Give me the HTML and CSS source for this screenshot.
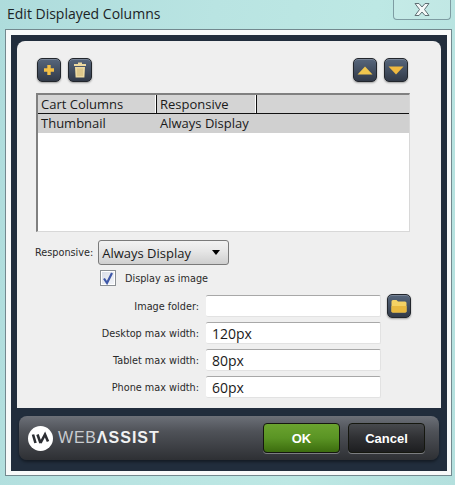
FILE: index.html
```html
<!DOCTYPE html>
<html lang="en">
<head>
  <meta charset="UTF-8" />
  <title>Edit Displayed Columns</title>
  <link rel="stylesheet" href="styles.css">
</head>
<body>
  <div class="titlebar">
    <span class="title">Edit Displayed Columns</span>
    <div class="close">
      <svg width="16" height="15" viewBox="0 0 16 15"><path d="M1 1.500H5L8 5 11 1.500H15L10.500 7.500 15 13.500H11L8 10 5 13.500H1L5.500 7.500Z" fill="#f4f8f8" stroke="#5f6f74" stroke-width="1"/></svg>
    </div>
  </div>

  <div class="frame">
    <div class="panel">
      <div class="toolbar">
        <div class="tool-group">
          <button class="icon-btn" type="button">
            <svg width="12" height="12" viewBox="0 0 12 12"><path d="M4.300 1h3.400v3.300H11v3.400H7.700V11H4.300V7.700H1V4.300h3.300Z" fill="#f3bf45"/></svg>
          </button>
          <button class="icon-btn" type="button">
            <svg width="14" height="16" viewBox="0 0 14 16"><path d="M5 .5h4v1.500h4v2H1v-2h4ZM2 5h10l-.6 10.500H2.600Z" fill="#ecd9a0"/><path d="M5 6.500v7.500M7 6.500v7.500M9 6.500v7.500" stroke="#c9ae6c" stroke-width=".8"/></svg>
          </button>
        </div>
        <div class="tool-group">
          <button class="icon-btn" type="button">
            <svg width="16" height="9" viewBox="0 0 16 9"><path d="M8 .5L15.500 8.500H.5Z" fill="#f0c64e"/></svg>
          </button>
          <button class="icon-btn" type="button">
            <svg width="16" height="9" viewBox="0 0 16 9"><path d="M.5 .5h15L8 8.500Z" fill="#f0b93f"/></svg>
          </button>
        </div>
      </div>

      <div class="grid">
        <div class="grid-head">
          <div class="head-cell col-name">Cart Columns</div>
          <div class="head-cell col-resp">Responsive</div>
          <div class="head-rest"></div>
        </div>
        <div class="grid-row">
          <div class="col-name">Thumbnail</div>
          <div class="col-resp">Always Display</div>
        </div>
      </div>

      <div class="select-row">
        <label class="small-label">Responsive:</label>
        <div class="select">
          <span>Always Display</span>
          <span class="caret"></span>
        </div>
      </div>

      <div class="check-row">
        <span class="checkbox">
          <svg width="12" height="13" viewBox="0 0 12 13"><path d="M2 6.500L5 11 10 1" fill="none" stroke="#3f58a8" stroke-width="2.200"/></svg>
        </span>
        <span class="small-label">Display as image</span>
      </div>

      <div class="field first">
        <label class="small-label field-label">Image folder:</label>
        <div class="input"></div>
        <button class="icon-btn" type="button">
          <svg width="16" height="14" viewBox="0 0 16 14"><path d="M.5 2.500Q.5 1 2 1h3.500L7 2.500h7q1.500 0 1.500 1.500v8.500q0 1-1.500 1H2q-1.500 0-1.500-1Z" fill="#f5d264"/><path d="M.5 7h15v5.500q0 1-1.500 1H2q-1.500 0-1.500-1Z" fill="#e9b93f"/></svg>
        </button>
      </div>
      <div class="field">
        <label class="small-label field-label">Desktop max width:</label>
        <div class="input">120px</div>
      </div>
      <div class="field">
        <label class="small-label field-label">Tablet max width:</label>
        <div class="input">80px</div>
      </div>
      <div class="field">
        <label class="small-label field-label">Phone max width:</label>
        <div class="input">60px</div>
      </div>
    </div>

    <div class="footer">
      <div class="logo">
        <span class="logo-mark">
          <svg width="25" height="25" viewBox="0 0 25 25"><circle cx="12.500" cy="12.500" r="12.500" fill="#fff"/><path d="M5 8.500L7.500 17M9.500 8.500L12.500 17M12.500 17L17 8.500 20 15.500" fill="none" stroke="#2c2e33" stroke-width="2.600"/></svg>
        </span>
        <span class="logo-text">WEB<b>ΛSSIST</b></span>
      </div>
      <div class="actions">
        <button class="btn btn-ok" type="button">OK</button>
        <button class="btn btn-cancel" type="button">Cancel</button>
      </div>
    </div>
  </div>
</body>
</html>
```

FILE: styles.css
```css
* {
  margin: 0;
  padding: 0;
  box-sizing: border-box;
}

html, body {
  height: 485px;
  overflow: hidden;
}

body {
  background: linear-gradient(100deg, #aedcdc 0%, #b9e4e2 40%, #bde8e4 70%, #b4e0de 100%);
  font-family: "Open Sans", "DejaVu Sans", sans-serif;
  padding: 0 4px 0 6px;
}

.titlebar {
  height: 30px;
  display: flex;
  justify-content: space-between;
  align-items: flex-start;
  margin-left: -6px;
}

.title {
  font-size: 14px;
  color: #1c2426;
  padding: 4px 0 0 7px;
}

.close {
  width: 58px;
  height: 20px;
  border: 1px solid #7e9ca2;
  border-top: none;
  border-radius: 0 0 4px 4px;
  display: flex;
  justify-content: center;
  align-items: center;
  background: rgba(255, 255, 255, 0.12);
}

.frame {
  height: 445px;
  background: #212d3c;
  border: solid #f7f9f9;
  border-width: 5px 4px 4px 5px;
  box-shadow: 0 0 0 1px #73898f;
  padding: 6px 6px 0 6px;
}

.panel {
  height: 367px;
  background: #efefef;
  border-radius: 8px 8px 0 0;
  padding: 17px 30px 0 20px;
}

.toolbar {
  display: flex;
  justify-content: space-between;
  height: 35px;
  margin-right: 3px;
}

.tool-group {
  display: flex;
  gap: 7px;
}

.icon-btn {
  width: 24px;
  height: 24px;
  border: 1px solid #22262c;
  border-radius: 5px;
  background: linear-gradient(#56667c, #323a48);
  box-shadow: 0 1px 2px rgba(0, 0, 0, 0.35), inset 0 1px 0 rgba(255, 255, 255, 0.2);
  display: flex;
  justify-content: center;
  align-items: center;
  flex: none;
}

.grid {
  height: 139px;
  width: 374px;
  margin-left: -1px;
  background: #fff;
  border: solid #808080;
  border-width: 2px 1px 1px 2px;
  border-bottom-color: #d8d8d8;
  border-right-color: #d8d8d8;
  font-size: 13px;
  color: #1a1a1a;
}

.grid-head {
  display: flex;
  height: 19px;
  background: #d4d4d4;
  border-bottom: 1px solid #111;
}

.head-cell {
  border-right: 1px solid #111;
  box-shadow: inset -1px 0 0 #fff;
}

.head-rest {
  flex: 1;
}

.col-name {
  width: 119px;
  padding-left: 3px;
  flex: none;
  line-height: 18px;
}

.col-resp {
  width: 100px;
  padding-left: 3px;
  flex: none;
  line-height: 18px;
  white-space: nowrap;
}

.grid-row {
  display: flex;
  height: 19px;
  background: #d0d0d0;
}

.small-label {
  font-family: "DejaVu Sans", sans-serif;
  font-size: 9.700px;
  color: #2a2a2a;
  white-space: nowrap;
}

.select-row {
  display: flex;
  align-items: center;
  gap: 5px;
  margin-top: 8px;
  height: 25px;
  margin-left: -2px;
}

.select {
  width: 131px;
  height: 25px;
  border: 1px solid #7a7a7a;
  border-radius: 3px;
  background: linear-gradient(#f2f2f2, #e6e6e6 45%, #cfcfcf);
  font-size: 13px;
  color: #1a1a1a;
  padding: 0 8px 0 3px;
  display: flex;
  align-items: center;
  justify-content: space-between;
}

.caret {
  width: 0;
  height: 0;
  border: 4.500px solid transparent;
  border-top: 5px solid #000;
  border-bottom: none;
}

.check-row {
  display: flex;
  align-items: center;
  gap: 9px;
  margin: 5px 0 0 63px;
  height: 16px;
}

.checkbox {
  width: 16px;
  height: 16px;
  border: 1px solid #8a8f94;
  background: linear-gradient(135deg, #d8dde8, #f4f6fa);
  box-shadow: inset 0 0 0 1px #fff;
  display: flex;
  justify-content: center;
  align-items: center;
}

.field {
  display: flex;
  align-items: center;
  height: 22px;
  margin-top: 5px;
  gap: 6px;
}

.field.first {
  margin-top: 9px;
}

.field-label {
  width: 162px;
  flex: none;
  text-align: right;
  margin-right: 1px;
}

.input {
  width: 175px;
  height: 22px;
  background: #fff;
  border-top: 1px solid #a8a8a8;
  border-bottom: 1px solid #e2e2e2;
  border-right: 1px solid #e2e2e2;
  border-radius: 2px;
  font-size: 14px;
  color: #1a1a1a;
  padding-left: 6px;
  line-height: 21px;
  flex: none;
}

.footer {
  height: 44px;
  margin: 8px 2px 0 2px;
  border-radius: 8px;
  background: linear-gradient(#6c7078, #4f5258 35%, #2e3034);
  box-shadow: 0 2px 3px rgba(0, 0, 0, 0.4);
  display: flex;
  justify-content: space-between;
  align-items: center;
  padding: 0 14px 0 9px;
}

.logo {
  display: flex;
  align-items: center;
  gap: 5px;
}

.logo-mark {
  display: flex;
}

.logo-text {
  font-family: "Liberation Sans", sans-serif;
  font-size: 16px;
  color: #c9ccd0;
  letter-spacing: 0.800px;
}

.logo-text b {
  color: #f1f2f3;
  font-weight: 700;
  letter-spacing: 1px;
}

.actions {
  display: flex;
  gap: 8px;
}

.btn {
  width: 77px;
  height: 30px;
  border-radius: 4px;
  font-family: "Liberation Sans", sans-serif;
  font-size: 13px;
  font-weight: 700;
  color: #fff;
  border: 1px solid #15170f;
  box-shadow: 0 1px 0 rgba(255, 255, 255, 0.35);
}

.btn-ok {
  background: linear-gradient(#6aa32f, #5a9424 50%, #3c6c0e);
}

.btn-cancel {
  background: linear-gradient(#47494d, #2f3033 50%, #1d1e20);
}
```
